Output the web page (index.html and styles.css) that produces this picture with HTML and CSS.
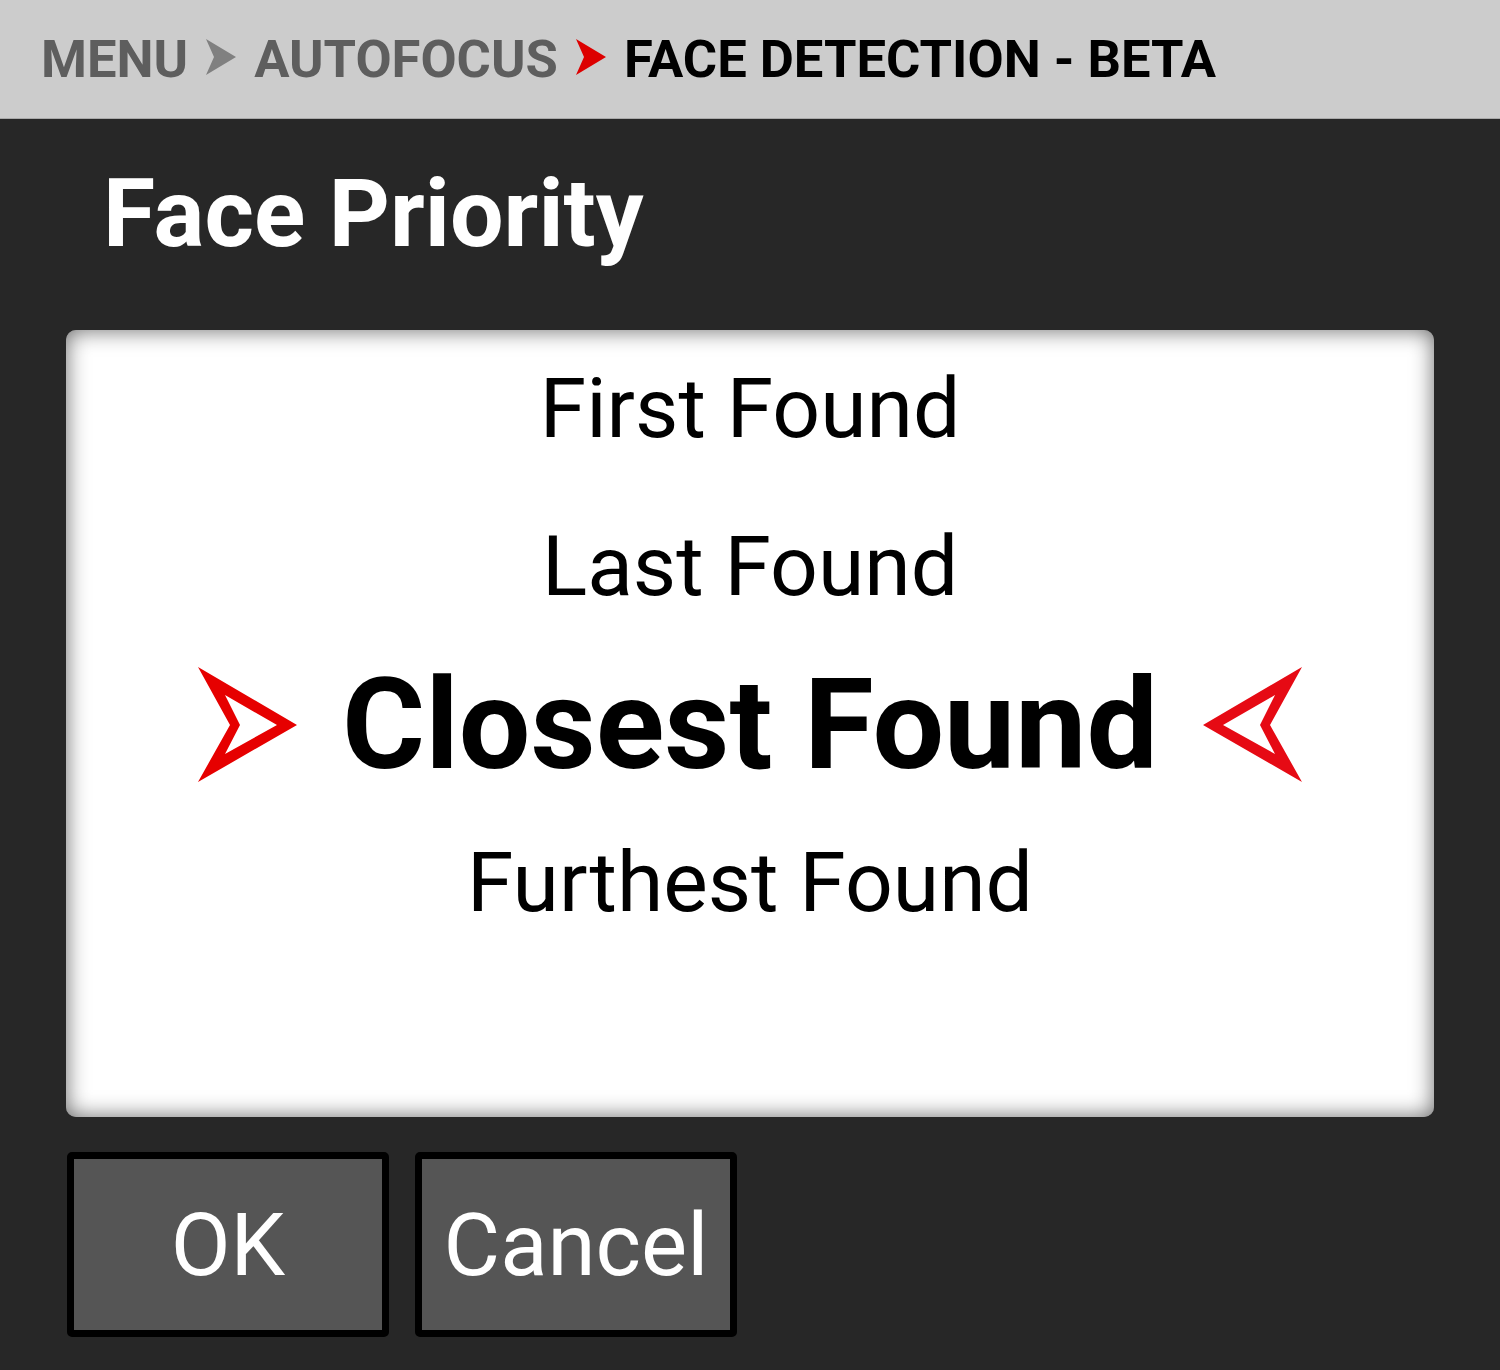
FILE: index.html
```html
<!DOCTYPE html>
<html lang="en">
<head>
<meta charset="utf-8">
<title>Face Priority</title>
<link rel="stylesheet" href="styles.css">
</head>
<body>
<header class="crumbs">
  <span class="crumb">MENU</span>
  <svg class="sep" viewBox="0 0 32 38" width="32" height="38"><path d="M1 1 L31 19 L1 37 L9 19 Z" fill="#808080"/></svg>
  <span class="crumb">AUTOFOCUS</span>
  <svg class="sep" viewBox="0 0 32 38" width="32" height="38"><path d="M1 1 L31 19 L1 37 L9 19 Z" fill="#dd0000"/></svg>
  <span class="crumb current">FACE DETECTION - BETA</span>
</header>
<h1 class="title">Face Priority</h1>
<section class="picker">
  <div class="option">First Found</div>
  <div class="option">Last Found</div>
  <div class="option selected">
    <svg class="mark" viewBox="0 0 104 120" width="104" height="120"><path fill-rule="evenodd" fill="#e60000" d="M2 2 L101 60 L2 117 L34 60 Z M29 30 L44 60 L29 89 L81 60 Z"/></svg>
    <span>Closest Found</span>
    <svg class="mark flip" viewBox="0 0 104 120" width="104" height="120"><path fill-rule="evenodd" fill="#e60a14" d="M2 2 L101 60 L2 117 L34 60 Z M29 30 L44 60 L29 89 L81 60 Z"/></svg>
  </div>
  <div class="option">Furthest Found</div>
</section>
<div class="actions">
  <button class="btn">OK</button>
  <button class="btn">Cancel</button>
</div>
</body>
</html>
```

FILE: styles.css
```css
html, body {
  margin: 0;
  padding: 0;
}
body {
  background: #272727;
  font-family: Roboto, "Noto Sans", sans-serif;
  width: 1500px;
  height: 1370px;
  overflow: hidden;
}
.crumbs {
  height: 118px;
  background: #cccccc;
  border-bottom: 1px solid #a9a9a9;
  display: flex;
  align-items: center;
  gap: 17px;
  padding-left: 41px;
  font-size: 52.5px;
  font-weight: 700;
  line-height: 1;
  color: #5e5e5e;
}
.crumb.current {
  color: #000;
}
.sep {
  display: block;
  margin-bottom: 4px;
}
.title {
  margin: 48px 0 69px;
  padding-left: 103px;
  font-size: 95px;
  font-weight: 700;
  line-height: 94px;
  color: #fff;
}
.picker {
  margin: 0 66px;
  height: 787px;
  box-sizing: border-box;
  background: #fff;
  border-radius: 10px;
  box-shadow: inset 0 0 22px rgba(0, 0, 0, 0.6);
  display: flex;
  flex-direction: column;
}
.option {
  height: 158px;
  line-height: 158px;
  text-align: center;
  font-size: 84px;
  color: #000;
}
.option.selected {
  display: flex;
  justify-content: center;
  align-items: center;
  gap: 42px;
  font-size: 127px;
  font-weight: 700;
}
.mark {
  display: block;
}
.mark.flip {
  transform: scaleX(-1);
}
.actions {
  display: flex;
  gap: 26px;
  margin: 35px 0 0 67px;
}
.btn {
  width: 322px;
  height: 185px;
  box-sizing: border-box;
  border: 7px solid #000;
  border-radius: 5px;
  background: #555555;
  color: #fff;
  font-family: Roboto, "Noto Sans", sans-serif;
  font-size: 87px;
  font-weight: 400;
  padding: 0;
  display: flex;
  align-items: center;
  justify-content: center;
}
```
